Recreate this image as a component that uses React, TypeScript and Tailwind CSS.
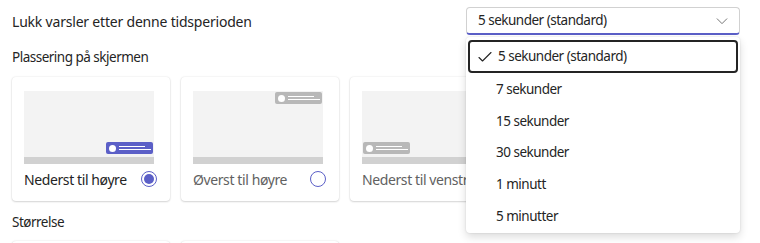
import React from "react";

const font = { fontFamily: '"Segoe UI", "Noto Sans", "Open Sans", sans-serif' };

function Toast({ color }: { color: string }) {
  return (
    <div className={`w-[47px] h-[12px] rounded-[2px] ${color} flex items-center px-[3px] gap-[3px]`}>
      <div className="w-[7px] h-[7px] rounded-full bg-white shrink-0" />
      <div className="flex flex-col gap-[2px] flex-1">
        <div className="h-[1px] bg-white w-[26px]" />
        <div className="h-[1px] bg-white w-[32px]" />
      </div>
    </div>
  );
}

function Card({
  label,
  pos,
  selected,
}: {
  label: string;
  pos: "br" | "tr" | "bl";
  selected?: boolean;
}) {
  const color = selected ? "bg-[#5b5fc7]" : "bg-[#b8b8b8]";
  return (
    <div className="w-[158px] h-[124px] shrink-0 rounded-[4px] bg-white shadow-[0_0_2px_rgba(0,0,0,0.12),0_1px_2px_rgba(0,0,0,0.14)] px-[12px] pt-[14px]">
      <div className="w-[130px] h-[73px] bg-[#f3f3f3] flex flex-col">
        <div className="flex-1 flex flex-col justify-between pb-[3px] pt-[1px] px-[1px]">
          <div className="flex justify-end h-[12px]">{pos === "tr" && <Toast color={color} />}</div>
          <div className={`flex h-[12px] ${pos === "bl" ? "justify-start" : "justify-end"}`}>
            {pos !== "tr" && <Toast color={color} />}
          </div>
        </div>
        <div className="h-[7px] bg-[#d1d1d1]" />
      </div>
      <div className="flex items-center justify-between mt-[7px] h-[16px]">
        <span
          className={`text-[14px] tracking-[-0.4px] whitespace-nowrap ${selected ? "text-[#242424]" : "text-[#616161]"}`}
        >
          {label}
        </span>
        <span className="w-[16px] h-[16px] rounded-full border border-[#5b5fc7] flex items-center justify-center mr-[1px] shrink-0">
          {selected && <span className="w-[10px] h-[10px] rounded-full bg-[#5b5fc7]" />}
        </span>
      </div>
    </div>
  );
}

export default function App() {
  const items = ["7 sekunder", "15 sekunder", "30 sekunder", "1 minutt", "5 minutter"];
  const shadowCard = "shadow-[0_0_2px_rgba(0,0,0,0.12),0_1px_2px_rgba(0,0,0,0.14)]";
  return (
    <div className="relative w-[760px] h-[243px] overflow-hidden bg-white text-[#242424]" style={font}>
      <div className="pl-[12px] pr-[20px]">
        <div className="flex items-center justify-between pt-[7px] h-[35px]">
          <span className="text-[14px] tracking-[-0.2px]">Lukk varsler etter denne tidsperioden</span>
          <div className="w-[274px] h-[28px] rounded-[4px] border border-[#d1d1d1] border-b-2 border-b-[#5b5fc7] flex items-center justify-between pl-[11px] pr-[10px]">
            <span className="text-[13.5px] tracking-[-0.5px]">5 sekunder (standard)</span>
            <svg width="14" height="14" viewBox="0 0 16 16" fill="none">
              <path d="M2.5 5.5 8 11l5.5-5.5" stroke="#616161" strokeWidth="1" strokeLinecap="round" strokeLinejoin="round" />
            </svg>
          </div>
        </div>
        <div className="mt-[12px] text-[13.5px] tracking-[-0.5px] h-[20px] leading-[20px]">Plassering på skjermen</div>
        <div className="flex gap-[11px] mt-[10px]">
          <Card label="Nederst til høyre" pos="br" selected />
          <Card label="Øverst til høyre" pos="tr" />
          <Card label="Nederst til venstre" pos="bl" />
        </div>
        <div className="mt-[11px] text-[13.5px] tracking-[-0.5px] h-[20px] leading-[20px]">Størrelse</div>
        <div className="flex gap-[11px] mt-[9px]">
          <div className={`w-[158px] h-[40px] rounded-[4px] bg-white ${shadowCard}`} />
          <div className={`w-[158px] h-[40px] rounded-[4px] bg-white ${shadowCard}`} />
        </div>
      </div>

      <div className="absolute left-[466px] top-[37px] w-[274px] h-[196px] bg-white rounded-[4px] shadow-[0_0_2px_rgba(0,0,0,0.12),0_4px_8px_rgba(0,0,0,0.14)] px-[2px] pt-[3px]">
        <div className="h-[33px] rounded-[4px] border-2 border-[#242424] flex items-center pl-[7px] gap-[5px]">
          <svg width="16" height="16" viewBox="0 0 16 16" fill="none">
            <path d="M2 8.5 5.5 12 14 3.5" stroke="#242424" strokeWidth="1.1" strokeLinecap="round" strokeLinejoin="round" />
          </svg>
          <span className="text-[13.5px] tracking-[-0.5px]">5 sekunder (standard)</span>
        </div>
        {items.map((t) => (
          <div key={t} className="h-[31.8px] flex items-center pl-[28px] text-[13.5px] tracking-[-0.5px]">
            {t}
          </div>
        ))}
      </div>
    </div>
  );
}
